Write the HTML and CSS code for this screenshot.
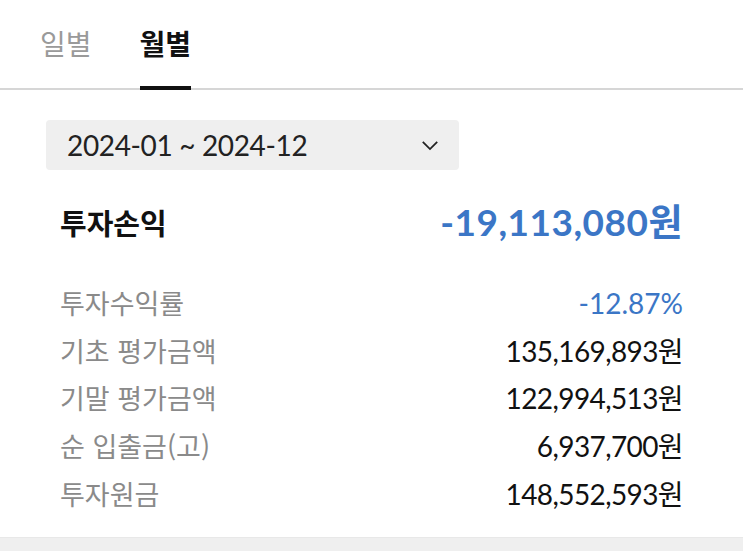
FILE: index.html
```html
<!DOCTYPE html>
<html lang="ko">
<head>
<meta charset="utf-8">
<link rel="stylesheet" href="styles.css">
</head>
<body>
<div class="page">
  <nav class="tabs">
    <div class="tab">일별</div>
    <div class="tab active">월별</div>
  </nav>
  <div class="content">
    <div class="select">
      <span class="select-text">2024-01 ~ 2024-12</span>
      <svg class="chev" width="20" height="12" viewBox="0 0 20 12"><path d="M2 2 L10 10 L18 2" fill="none" stroke="#222" stroke-width="2"/></svg>
    </div>
    <div class="summary">
      <div class="summary-label">투자손익</div>
      <div class="summary-value">-19,113,080원</div>
    </div>
    <div class="rows">
      <div class="row"><span class="label">투자수익률</span><span class="value blue">-12.87%</span></div>
      <div class="row"><span class="label">기초 평가금액</span><span class="value">135,169,893원</span></div>
      <div class="row"><span class="label">기말 평가금액</span><span class="value">122,994,513원</span></div>
      <div class="row"><span class="label">순 입출금(고)</span><span class="value">6,937,700원</span></div>
      <div class="row"><span class="label">투자원금</span><span class="value">148,552,593원</span></div>
    </div>
  </div>
  <div class="footer-band"></div>
</div>
</body>
</html>
```
FILE: styles.css
```css
* { box-sizing: border-box; }
html, body { margin: 0; padding: 0; background: #fff; }
body { font-family: Lato, "Noto Sans CJK KR", sans-serif; color: #111; width: 743px; height: 551px; overflow: hidden; }
.page { display: flex; flex-direction: column; height: 551px; }
.tabs { display: flex; gap: 48px; padding: 0 0 0 40px; height: 90px; border-bottom: 2px solid #d6d6d6; }
.tab { font-size: 28px; line-height: 40px; color: #9a9a9a; padding-top: 23px; font-family: "Noto Sans CJK KR", sans-serif; position: relative; }
.tab.active { color: #111; font-weight: 700; }
.tab.active::after { content: ""; position: absolute; left: 0; right: 0; bottom: -2px; height: 4px; background: #111; }
.content { flex: 1; padding: 30px 60px 0 46px; }
.select { width: 413px; height: 50px; background: #efefef; border-radius: 4px; display: flex; align-items: center; justify-content: space-between; padding: 0 20px 0 21px; }
.select-text { font-size: 28px; line-height: 34px; color: #222; letter-spacing: -0.35px; }
.chev { width: 18px; height: 11px; }
.summary { display: flex; justify-content: space-between; align-items: center; height: 44px; margin-top: 30px; padding-left: 14px; }
.summary-label { font-family: "Noto Sans CJK KR", sans-serif; font-weight: 700; font-size: 29px; line-height: 44px; }
.summary-value { font-size: 37px; line-height: 44px; font-weight: 700; color: #3b76c6; letter-spacing: 0.5px; }
.rows { padding: 35px 0 0 14px; display: flex; flex-direction: column; }
.row { display: flex; justify-content: space-between; align-items: center; height: 47.75px; }
.label { font-family: "Noto Sans CJK KR", sans-serif; font-size: 27px; line-height: 36px; color: #8a8a8a; }
.value { font-size: 28px; line-height: 36px; color: #111; letter-spacing: -0.6px; }
.value.blue { color: #3b76c6; letter-spacing: 0; }
.footer-band { height: 14px; background: #efefef; border-top: 1px solid #e8e8e8; }
```
